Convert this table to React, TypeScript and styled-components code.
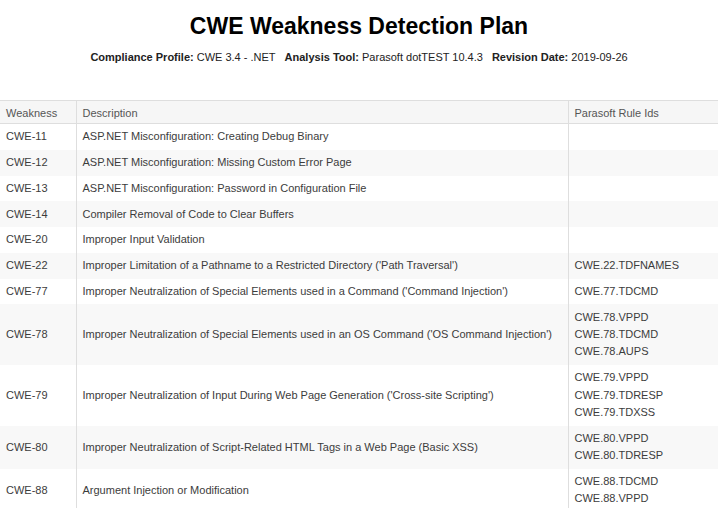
import React from 'react';
import styled, { createGlobalStyle } from 'styled-components';

const GlobalStyle = createGlobalStyle`
  html, body {
    margin: 0;
    padding: 0;
    background: #fff;
    font-family: 'Liberation Sans', Arial, sans-serif;
  }
`;

type Weakness = {
  id: string;
  description: string;
  rules: string[];
};

const weaknesses: Weakness[] = [
  { id: 'CWE-11', description: 'ASP.NET Misconfiguration: Creating Debug Binary', rules: [] },
  { id: 'CWE-12', description: 'ASP.NET Misconfiguration: Missing Custom Error Page', rules: [] },
  { id: 'CWE-13', description: 'ASP.NET Misconfiguration: Password in Configuration File', rules: [] },
  { id: 'CWE-14', description: 'Compiler Removal of Code to Clear Buffers', rules: [] },
  { id: 'CWE-20', description: 'Improper Input Validation', rules: [] },
  {
    id: 'CWE-22',
    description: "Improper Limitation of a Pathname to a Restricted Directory ('Path Traversal')",
    rules: ['CWE.22.TDFNAMES'],
  },
  {
    id: 'CWE-77',
    description: "Improper Neutralization of Special Elements used in a Command ('Command Injection')",
    rules: ['CWE.77.TDCMD'],
  },
  {
    id: 'CWE-78',
    description:
      "Improper Neutralization of Special Elements used in an OS Command ('OS Command Injection')",
    rules: ['CWE.78.VPPD', 'CWE.78.TDCMD', 'CWE.78.AUPS'],
  },
  {
    id: 'CWE-79',
    description: "Improper Neutralization of Input During Web Page Generation ('Cross-site Scripting')",
    rules: ['CWE.79.VPPD', 'CWE.79.TDRESP', 'CWE.79.TDXSS'],
  },
  {
    id: 'CWE-80',
    description: 'Improper Neutralization of Script-Related HTML Tags in a Web Page (Basic XSS)',
    rules: ['CWE.80.VPPD', 'CWE.80.TDRESP'],
  },
  { id: 'CWE-88', description: 'Argument Injection or Modification', rules: ['CWE.88.TDCMD', 'CWE.88.VPPD'] },
];

export default function App() {
  return (
    <>
      <GlobalStyle />
      <Page>
        <Header>
          <Title>CWE Weakness Detection Plan</Title>
          <Meta>
            <MetaItem>
              <b>Compliance Profile:</b> CWE 3.4 - .NET
            </MetaItem>
            <MetaItem>
              <b>Analysis Tool:</b> Parasoft dotTEST 10.4.3
            </MetaItem>
            <MetaItem>
              <b>Revision Date:</b> 2019-09-26
            </MetaItem>
          </Meta>
        </Header>
        <Table>
          <colgroup>
            <col style={{ width: 76 }} />
            <col style={{ width: 492 }} />
            <col />
          </colgroup>
          <thead>
            <tr>
              <Th>Weakness</Th>
              <Th>Description</Th>
              <Th>Parasoft Rule Ids</Th>
            </tr>
          </thead>
          <tbody>
            {weaknesses.map(w => (
              <Row key={w.id}>
                <Td>{w.id}</Td>
                <Td>{w.description}</Td>
                <Td>
                  {w.rules.map(rule => (
                    <RuleId key={rule}>{rule}</RuleId>
                  ))}
                </Td>
              </Row>
            ))}
          </tbody>
        </Table>
      </Page>
    </>
  );
}

const Page = styled.div`
  width: 100%;
  color: #000;
`;

const Header = styled.header`
  padding: 13px 0 0;
  text-align: center;
  margin-bottom: 36px;
`;

const Title = styled.h1`
  margin: 0;
  font-size: 23px;
  font-weight: 700;
  line-height: 27px;
  color: #000;
`;

const Meta = styled.div`
  margin: 10px 0 0;
  display: flex;
  justify-content: center;
  gap: 9px;
  font-size: 11px;
  line-height: 14px;
  color: #222;

  b {
    font-weight: 700;
  }
`;

const MetaItem = styled.span`
  white-space: nowrap;
`;

const Table = styled.table`
  width: 100%;
  table-layout: fixed;
  border-collapse: collapse;
  font-size: 11px;
  color: #3c3c3c;
`;

const Th = styled.th`
  padding: 5px 6px 3px;
  height: 22px;
  box-sizing: border-box;
  text-align: left;
  font-weight: 400;
  color: #555;
  background-color: #f6f6f6;
  border-top: 1px solid #dedede;
  border-bottom: 1px solid #dedede;
  border-left: 1px solid #dedede;
  line-height: 14px;

  &:first-child {
    border-left: none;
  }
`;

const Row = styled.tr`
  &:nth-child(even) {
    background-color: #f8f8f8;
  }
`;

const Td = styled.td`
  padding: 4.2px 6px;
  vertical-align: middle;
  line-height: 17.4px;
  border-left: 1px solid #dedede;

  &:first-child {
    border-left: none;
  }
`;

const RuleId = styled.div`
  white-space: nowrap;
`;
